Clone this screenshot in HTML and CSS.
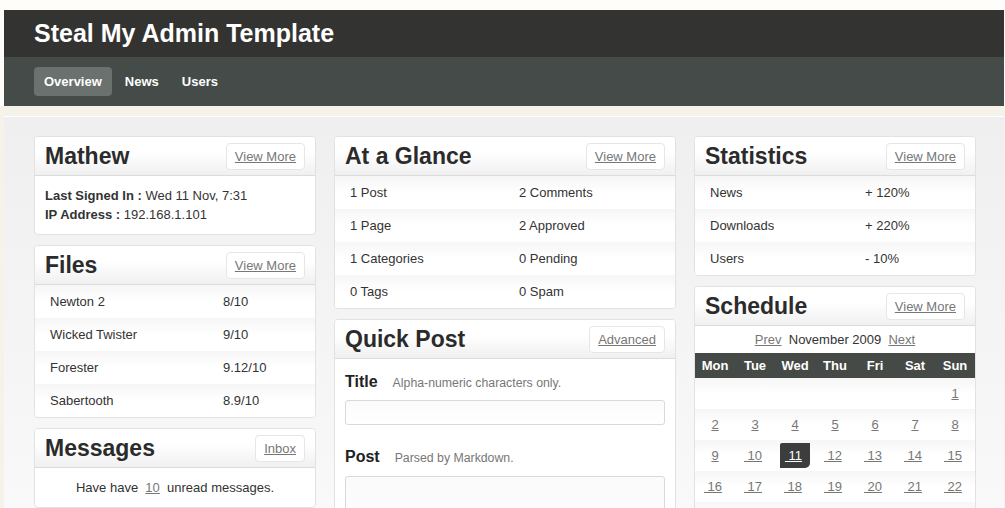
FILE: index.html
```html
<!DOCTYPE html>
<html lang="en">
<head>
<meta charset="utf-8">
<title>Steal My Admin Template</title>
<link rel="stylesheet" href="styles.css">
</head>
<body>
<div class="page">
  <header class="masthead">
    <h1 class="site-title">Steal My Admin Template</h1>
  </header>
  <nav class="nav">
    <a class="nav-item active" href="#">Overview</a>
    <a class="nav-item" href="#">News</a>
    <a class="nav-item" href="#">Users</a>
  </nav>
  <div class="strip"></div>
  <main class="main">
    <div class="col col-side">
      <section class="panel">
        <div class="panel-head"><h2 class="panel-title">Mathew</h2><a class="btn" href="#">View More</a></div>
        <div class="panel-body info">
          <div><b>Last Signed In :</b> Wed 11 Nov, 7:31</div>
          <div><b>IP Address :</b> 192.168.1.101</div>
        </div>
      </section>
      <section class="panel">
        <div class="panel-head"><h2 class="panel-title">Files</h2><a class="btn" href="#">View More</a></div>
        <div class="rows rows-files">
          <div class="row"><span>Newton 2</span><span>8/10</span></div>
          <div class="row"><span>Wicked Twister</span><span>9/10</span></div>
          <div class="row"><span>Forester</span><span>9.12/10</span></div>
          <div class="row"><span>Sabertooth</span><span>8.9/10</span></div>
        </div>
      </section>
      <section class="panel">
        <div class="panel-head"><h2 class="panel-title">Messages</h2><a class="btn" href="#">Inbox</a></div>
        <div class="panel-body centered">Have have &nbsp;<a class="link" href="#">10</a>&nbsp; unread messages.</div>
      </section>
    </div>

    <div class="col col-mid">
      <section class="panel">
        <div class="panel-head"><h2 class="panel-title">At a Glance</h2><a class="btn" href="#">View More</a></div>
        <div class="rows rows-glance">
          <div class="row"><span>1 Post</span><span>2 Comments</span></div>
          <div class="row"><span>1 Page</span><span>2 Approved</span></div>
          <div class="row"><span>1 Categories</span><span>0 Pending</span></div>
          <div class="row"><span>0 Tags</span><span>0 Spam</span></div>
        </div>
      </section>
      <section class="panel">
        <div class="panel-head"><h2 class="panel-title">Quick Post</h2><a class="btn" href="#">Advanced</a></div>
        <form class="panel-body form">
          <label class="field-label">Title <span class="hint">Alpha-numeric characters only.</span></label>
          <input class="input" type="text">
          <label class="field-label field-gap">Post <span class="hint">Parsed by Markdown.</span></label>
          <textarea class="input textarea"></textarea>
        </form>
      </section>
    </div>

    <div class="col col-side">
      <section class="panel">
        <div class="panel-head"><h2 class="panel-title">Statistics</h2><a class="btn" href="#">View More</a></div>
        <div class="rows rows-stats">
          <div class="row"><span>News</span><span>+ 120%</span></div>
          <div class="row"><span>Downloads</span><span>+ 220%</span></div>
          <div class="row"><span>Users</span><span>- 10%</span></div>
        </div>
      </section>
      <section class="panel">
        <div class="panel-head"><h2 class="panel-title">Schedule</h2><a class="btn" href="#">View More</a></div>
        <div class="cal-nav"><a class="link" href="#">Prev</a>&nbsp; November 2009 &nbsp;<a class="link" href="#">Next</a></div>
        <table class="cal">
          <thead>
            <tr><th>Mon</th><th>Tue</th><th>Wed</th><th>Thu</th><th>Fri</th><th>Sat</th><th>Sun</th></tr>
          </thead>
          <tbody>
            <tr><td></td><td></td><td></td><td></td><td></td><td></td><td><a class="link" href="#">1</a></td></tr>
            <tr><td><a class="link" href="#">2</a></td><td><a class="link" href="#">3</a></td><td><a class="link" href="#">4</a></td><td><a class="link" href="#">5</a></td><td><a class="link" href="#">6</a></td><td><a class="link" href="#">7</a></td><td><a class="link" href="#">8</a></td></tr>
            <tr><td><a class="link" href="#">9</a></td><td><a class="link dd" href="#">&nbsp;10</a></td><td><a class="link today" href="#">&nbsp;11</a></td><td><a class="link dd" href="#">&nbsp;12</a></td><td><a class="link dd" href="#">&nbsp;13</a></td><td><a class="link dd" href="#">&nbsp;14</a></td><td><a class="link dd" href="#">&nbsp;15</a></td></tr>
            <tr><td><a class="link dd" href="#">&nbsp;16</a></td><td><a class="link dd" href="#">&nbsp;17</a></td><td><a class="link dd" href="#">&nbsp;18</a></td><td><a class="link dd" href="#">&nbsp;19</a></td><td><a class="link dd" href="#">&nbsp;20</a></td><td><a class="link dd" href="#">&nbsp;21</a></td><td><a class="link dd" href="#">&nbsp;22</a></td></tr>
            <tr class="spacer"><td colspan="7"></td></tr>
          </tbody>
        </table>
      </section>
    </div>
  </main>
</div>
</body>
</html>
```

FILE: styles.css
```css
html, body {
  margin: 0;
  padding: 0;
  overflow: hidden;
}

body {
  font-family: "Liberation Sans", Arial, sans-serif;
  font-size: 13px;
  color: #333;
  background: linear-gradient(#fffdf9 0, #fffdf9 106px, #f5f3e9 106px);
}

.page {
  width: 1000px;
  margin: 10px 0 0 4px;
}

.masthead {
  background: #333331;
  height: 47px;
  padding-left: 30px;
}

.site-title {
  margin: 0;
  font-size: 25px;
  line-height: 47px;
  font-weight: bold;
  color: #fff;
}

.nav {
  background: #454b48;
  height: 49px;
  box-sizing: border-box;
  padding: 10px 0 0 30px;
  display: flex;
  gap: 3px;
  align-items: flex-start;
}

.nav-item {
  display: block;
  height: 29px;
  line-height: 29px;
  padding: 0 10px;
  font-size: 13px;
  font-weight: bold;
  color: #fff;
  text-decoration: none;
  border-radius: 4px;
}

.nav-item.active {
  background: #6a716e;
}

.strip {
  height: 10px;
  background: #f5f3e9;
}

.main {
  border-top: 1px solid #fff;
  background: linear-gradient(#efefef 0, #f4f4f4 200px, #f9f9f9 400px);
  padding: 19px 28px 0 30px;
  display: flex;
  gap: 18px;
  align-items: flex-start;
  height: 600px;
}

.col {
  display: flex;
  flex-direction: column;
  gap: 10px;
}

.col-side {
  width: 282px;
}

.col-mid {
  width: 342px;
}

.panel {
  background: #fff;
  border: 1px solid #e2e2e2;
  border-radius: 4px;
  overflow: hidden;
}

.panel-head {
  display: flex;
  justify-content: space-between;
  align-items: center;
  height: 38px;
  padding: 0 10px;
  background: linear-gradient(#fff 0, #fff 40%, #f0f0f0 100%);
  border-bottom: 1px solid #dcdcdc;
}

.panel-title {
  margin: 0;
  font-size: 23px;
  font-weight: bold;
  color: #2b2b2b;
}

.btn {
  display: block;
  height: 25px;
  line-height: 25px;
  padding: 0 8px;
  border: 1px solid #e6e6e6;
  border-radius: 4px;
  background: #fff;
  font-size: 13px;
  color: #777;
  text-decoration: underline;
}

.panel-body {
  padding: 10px 10px;
  line-height: 19px;
}

.info b {
  color: #333;
}

.centered {
  text-align: center;
}

.link {
  color: #777;
  text-decoration: underline;
}

.rows .row {
  display: grid;
  height: 33px;
  align-items: center;
  padding-left: 15px;
  background: linear-gradient(#f6f6f6 0, #fff 50%);
}

.rows-files .row {
  grid-template-columns: 173px 1fr;
}

.rows-glance .row {
  grid-template-columns: 169px 1fr;
}

.rows-stats .row {
  grid-template-columns: 155px 1fr;
}

.form {
  display: flex;
  flex-direction: column;
  padding: 13px 10px 10px;
}

.field-label {
  display: flex;
  align-items: baseline;
  gap: 15px;
  font-size: 16px;
  font-weight: bold;
  line-height: 20px;
  color: #222;
}

.field-gap {
  margin-top: 22px;
}

.hint {
  font-size: 12.3px;
  font-weight: normal;
  color: #777;
}

.input {
  margin-top: 7px;
  height: 25px;
  box-sizing: border-box;
  border: 1px solid #d9d9d9;
  border-radius: 3px;
  background: linear-gradient(#fbfbfb, #fff);
  font-family: inherit;
  font-size: 13px;
  padding: 2px 6px;
}

.textarea {
  margin-top: 8px;
  height: 120px;
  resize: none;
}

.cal-nav {
  text-align: center;
  line-height: 19px;
  padding: 4px 0;
  color: #333;
}

.cal {
  width: 100%;
  border-collapse: collapse;
  table-layout: fixed;
}

.cal th {
  background: #454a47;
  color: #fff;
  font-weight: bold;
  font-size: 13px;
  height: 25px;
  padding: 0;
  text-align: center;
}

.cal td {
  height: 31px;
  padding: 0;
  text-align: center;
}

.cal tbody tr {
  background: linear-gradient(#f6f6f6 0, #fff 50%);
}

.cal .dd {
  margin-left: -4px;
}

.cal .today {
  display: inline-block;
  width: 30px;
  height: 25px;
  line-height: 25px;
  background: #3b3e3c;
  color: #fff;
  border-radius: 2px 0 5px 0;
  box-sizing: border-box;
  padding-right: 3px;
}
```
